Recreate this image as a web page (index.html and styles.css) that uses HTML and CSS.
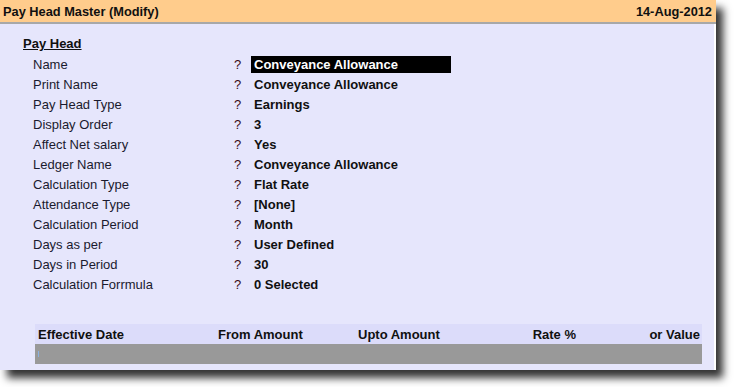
FILE: index.html
```html
<!DOCTYPE html>
<html lang="en">
<head>
    <meta charset="UTF-8">
    <title>Pay Head Master (Modify)</title>
    <link rel="stylesheet" href="styles.css">
</head>
<body>
<div class="window">
    <div class="titlebar">
        <span>Pay Head Master (Modify)</span>
        <span>14-Aug-2012</span>
    </div>
    <div class="content">
        <div class="section">Pay Head</div>
        <div class="fields">
            <div class="row"><span class="label">Name</span><span class="q">?</span><span class="value active">Conveyance Allowance</span></div>
            <div class="row"><span class="label">Print Name</span><span class="q">?</span><span class="value">Conveyance Allowance</span></div>
            <div class="row"><span class="label">Pay Head Type</span><span class="q">?</span><span class="value">Earnings</span></div>
            <div class="row"><span class="label">Display Order</span><span class="q">?</span><span class="value">3</span></div>
            <div class="row"><span class="label">Affect Net salary</span><span class="q">?</span><span class="value">Yes</span></div>
            <div class="row"><span class="label">Ledger Name</span><span class="q">?</span><span class="value">Conveyance Allowance</span></div>
            <div class="row"><span class="label">Calculation Type</span><span class="q">?</span><span class="value">Flat Rate</span></div>
            <div class="row"><span class="label">Attendance Type</span><span class="q">?</span><span class="value">[None]</span></div>
            <div class="row"><span class="label">Calculation Period</span><span class="q">?</span><span class="value">Month</span></div>
            <div class="row"><span class="label">Days as per</span><span class="q">?</span><span class="value">User Defined</span></div>
            <div class="row"><span class="label">Days in Period</span><span class="q">?</span><span class="value">30</span></div>
            <div class="row"><span class="label">Calculation Forrmula</span><span class="q">?</span><span class="value">0 Selected</span></div>
        </div>
        <div class="grid">
            <div class="grid-head">
                <span class="c-date">Effective Date</span>
                <span class="c-from">From Amount</span>
                <span class="c-upto">Upto Amount</span>
                <span class="c-rate">Rate %</span>
                <span class="c-value">or Value</span>
            </div>
            <div class="grid-row"><span class="cursor"></span></div>
        </div>
    </div>
</div>
</body>
</html>
```

FILE: styles.css
```css
html, body {
    height: 100%;
}
body {
    margin: 0;
    background: #ffffff;
    font-family: "Liberation Sans", Arial, sans-serif;
    font-size: 13px;
    color: #000;
}
.window {
    width: 716px;
    height: 370px;
    display: flex;
    flex-direction: column;
    background: #e6e6fc;
    box-shadow: 7px 8px 8px rgba(0, 0, 0, 0.8);
}
.titlebar {
    height: 22px;
    display: flex;
    justify-content: space-between;
    align-items: center;
    padding: 0 4px 0 3px;
    background: #ffcc8c;
    border-bottom: 2px solid #a8a8a8;
    font-weight: bold;
    font-size: 12.8px;
    color: #101010;
}
.content {
    flex: 1;
    display: flex;
    flex-direction: column;
    padding: 12px 0 0 23px;
    border-right: 2px solid #ffffff;
}
.section {
    font-weight: bold;
    text-decoration: underline;
    height: 18px;
    line-height: 16px;
    color: #101010;
}
.fields {
    padding-left: 10px;
}
.row {
    display: flex;
    height: 20px;
    align-items: center;
}
.label {
    width: 201px;
    color: #1a1a2e;
}
.q {
    width: 17px;
    color: #3a0a14;
}
.value {
    font-weight: bold;
    color: #101010;
    padding: 1px 3px;
}
.value.active {
    width: 194px;
    background: #000000;
    color: #ffffff;
}
.grid {
    margin: 30px 12px 0 12px;
}
.grid-head {
    display: flex;
    height: 20px;
    align-items: center;
    padding: 0 2px 0 3px;
    background: #dcdcfa;
    font-weight: bold;
    color: #101010;
}
.c-date { width: 180px; }
.c-from { width: 140px; }
.c-upto { width: 100px; }
.c-rate { width: 118px; text-align: right; }
.c-value { flex: 1; text-align: right; }
.grid-row {
    height: 20px;
    background: #999999;
    display: flex;
    align-items: center;
    padding-left: 3px;
}
.cursor {
    width: 1px;
    height: 6px;
    background: #8ab0e0;
}
```
